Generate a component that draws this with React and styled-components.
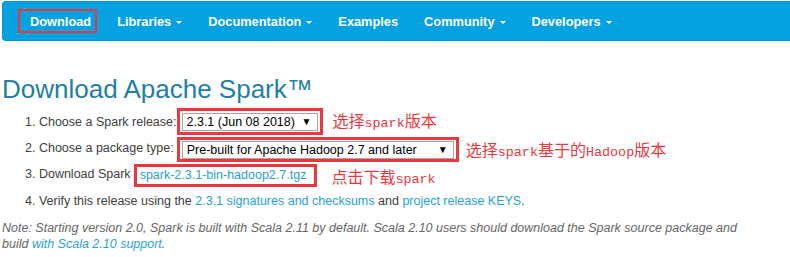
import React from "react";
import styled, { createGlobalStyle } from "styled-components";

const Global = createGlobalStyle`
  html, body { margin: 0; padding: 0; background: #fff; overflow: hidden; }
  body { font-family: "Liberation Sans", Arial, sans-serif; color: #404040; }
`;

const Page = styled.div`
  padding: 1px 0 0 2px;
  width: 790px;
  box-sizing: border-box;
`;

const Navbar = styled.nav`
  display: flex;
  align-items: center;
  height: 38px;
  margin-right: -10px;
  padding-left: 15px;
  background: #05a1e0;
  border: 1px solid #0a94cc;
  border-right: none;
  border-radius: 4px 0 0 4px;
`;

const NavItem = styled.a`
  display: flex;
  align-items: center;
  height: 24px;
  margin-right: ${(p) => (p.$active ? "7px" : "0")};
  padding-left: ${(p) => (p.$active ? "12px" : "13px")};
  padding-right: ${(p) => (p.$active ? "6px" : "13px")};
  box-sizing: border-box;
  font-weight: bold;
  font-size: 12.8px;
  color: #fff;
  text-decoration: none;
  white-space: nowrap;
  outline: ${(p) => (p.$active ? "2px solid #e8383d" : "none")};
  outline-offset: -2px;
`;

const Caret = styled.span`
  display: inline-block;
  width: 0;
  height: 0;
  margin-left: 5px;
  margin-top: 2px;
  border-left: 3.5px solid transparent;
  border-right: 3.5px solid transparent;
  border-top: 3.5px solid #fff;
`;

const Title = styled.h1`
  margin: 34px 0 5px 0;
  font-weight: normal;
  font-size: 26px;
  line-height: 28.6px;
  color: #1f7fa6;
`;

const Steps = styled.ol`
  margin: 0;
  padding: 0 0 0 23px;
  list-style: none;
  counter-reset: step;
`;

const Step = styled.li`
  display: flex;
  align-items: center;
  height: 26.3px;
  font-size: 12.5px;
  white-space: nowrap;
  counter-increment: step;
  &::before {
    content: counter(step) ". ";
    white-space: pre;
  }
`;

const Highlight = styled.span`
  display: inline-flex;
  align-items: center;
  margin: ${(p) => p.$margin || "0"};
  padding: ${(p) => p.$pad || "2px"};
  border: 3px solid #e8383d;
  height: ${(p) => p.$h || "auto"};
  box-sizing: border-box;
`;

const SelectWrap = styled.span`
  position: relative;
  display: inline-block;
  width: ${(p) => p.$w}px;
  height: 18px;
`;

const Select = styled.select`
  appearance: none;
  -webkit-appearance: none;
  width: 100%;
  height: 18px;
  margin: 0;
  padding: 0 0 0 4px;
  border: 1px solid #a6a6a6;
  border-radius: 0;
  background: #fff;
  font-family: "Liberation Sans", Arial, sans-serif;
  font-size: 12.5px;
  color: #000;
  line-height: 16px;
`;

const Arrow = styled.span`
  position: absolute;
  right: 6px;
  top: 3px;
  font-size: 10px;
  line-height: 12px;
  color: #000;
  pointer-events: none;
`;

const Link = styled.a`
  color: #2a9fd6;
  text-decoration: none;
`;

const Note = styled.p`
  margin: 6px 0 0 0;
  font-size: 12.5px;
  line-height: 16px;
  font-style: italic;
  color: #666;
  width: 760px;
`;

const Annotation = styled.span`
  margin-left: ${(p) => p.$gap}px;
  margin-top: ${(p) => p.$dy || 0}px;
  font-family: "Noto Sans CJK SC", sans-serif;
  font-size: 16px;
  line-height: 18px;
  color: #e8383d;
`;

const Latin = styled.span`
  font-family: "Liberation Mono", monospace;
  font-size: 13.4px;
`;

const Space = () => <span>&nbsp;</span>;

export default function App() {
  return (
    <Page>
      <Global />
      <Navbar>
        <NavItem $active href="#">Download</NavItem>
        <NavItem href="#">Libraries<Caret /></NavItem>
        <NavItem href="#">Documentation<Caret /></NavItem>
        <NavItem href="#">Examples</NavItem>
        <NavItem href="#">Community<Caret /></NavItem>
        <NavItem href="#">Developers<Caret /></NavItem>
      </Navbar>
      <Title>Download Apache Spark™</Title>
      <Steps>
        <Step>
          Choose a Spark release:
          <Highlight $h="27px">
            <SelectWrap $w={136}>
              <Select defaultValue="2.3.1">
                <option value="2.3.1">2.3.1 (Jun 08 2018)</option>
              </Select>
              <Arrow>▼</Arrow>
            </SelectWrap>
          </Highlight>
          <Annotation $gap={10}>选择<Latin>spark</Latin>版本</Annotation>
        </Step>
        <Step>
          Choose a package type:
          <Highlight $margin="3px 0 0 3px" $h="25px">
            <SelectWrap $w={272}>
              <Select defaultValue="h27">
                <option value="h27">Pre-built for Apache Hadoop 2.7 and later</option>
              </Select>
              <Arrow>▼</Arrow>
            </SelectWrap>
          </Highlight>
          <Annotation $gap={7} $dy={6}>选择<Latin>spark</Latin>基于的<Latin>Hadoop</Latin>版本</Annotation>
        </Step>
        <Step>
          Download Spark
          <Highlight $margin="2px 0 0 3px" $pad="0 8px 0 3px" $h="23px">
            <Link href="#">spark-2.3.1-bin-hadoop2.7.tgz</Link>
          </Highlight>
          <Annotation $gap={14} $dy={8}>点击下载<Latin>spark</Latin></Annotation>
        </Step>
        <Step>
          Verify this release using the<Space />
          <Link href="#">2.3.1 signatures and checksums</Link>
          <Space />and<Space />
          <Link href="#">project release KEYS</Link>.
        </Step>
      </Steps>
      <Note>
        <span>Note: Starting version 2.0, Spark is built with Scala 2.11 by default. Scala 2.10 users should download the Spark source package and</span>{" "}
        <span>build</span> <Link href="#">with Scala 2.10 support</Link>.
      </Note>
    </Page>
  );
}
